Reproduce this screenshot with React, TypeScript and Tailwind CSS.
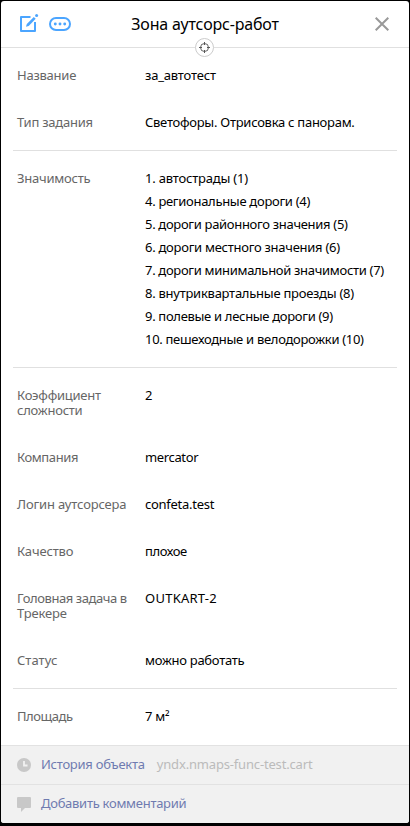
import type { ReactNode } from "react";

const significance = [
  { text: "1. автострады (1)", fit: "tracking-[-0.2px]" },
  { text: "4. региональные дороги (4)", fit: "tracking-[-0.3px]" },
  { text: "5. дороги районного значения (5)", fit: "tracking-[-0.31px]" },
  { text: "6. дороги местного значения (6)", fit: "tracking-[-0.27px]" },
  { text: "7. дороги минимальной значимости (7)", fit: "tracking-[-0.31px]" },
  { text: "8. внутриквартальные проезды (8)", fit: "tracking-[-0.26px]" },
  { text: "9. полевые и лесные дороги (9)", fit: "tracking-[-0.31px]" },
  { text: "10. пешеходные и велодорожки (10)", fit: "tracking-[-0.3px]" },
];

function Row({ label, children }: { label: ReactNode; children: ReactNode }) {
  return (
    <div className="flex px-4">
      <div className="w-32 shrink-0 tracking-[-0.24px] whitespace-nowrap text-[#666]">{label}</div>
      <div className="tracking-[-0.27px] whitespace-nowrap text-black">{children}</div>
    </div>
  );
}

function Section({ children, first = false }: { children: ReactNode; first?: boolean }) {
  return (
    <section className={first ? "flex flex-col gap-8 pt-5 pb-5" : "mx-3 flex flex-col gap-8 border-t border-[#e0e0e0] py-5 *:-mx-3"}>
      {children}
    </section>
  );
}

export default function App() {
  return (
    <main className="h-[826px] w-[410px] bg-black px-px pt-px pb-[3px] font-['Noto_Sans',sans-serif] text-[13px] leading-[15px]">
      <div className="flex h-[822px] flex-col overflow-hidden rounded-[3px] bg-white">
        <header className="relative flex h-[47px] shrink-0 items-center border-b border-[#e0e0e0]">
          <div className="flex w-[72px] shrink-0 justify-between pl-[18px]">
            <svg width="22" height="24" viewBox="0 0 22 24" fill="none" stroke="#4ba5ff">
              <path d="M11.5 5H2v14h14V10" strokeWidth="2" strokeLinejoin="round" />
              <path d="m7 14.8.8-2.8 7-7.1 1.9 1.9-7 7.1z" fill="#4ba5ff" stroke="none" />
              <circle cx="17.6" cy="3.4" r="1.5" fill="#4ba5ff" stroke="none" />
            </svg>
            <svg width="24" height="24" viewBox="0 0 24 24" fill="none">
              <rect x="1" y="6" width="20" height="12" rx="6" stroke="#4ba5ff" strokeWidth="2" />
              <g fill="#4ba5ff"><circle cx="6.3" cy="12" r="1.45" /><circle cx="11" cy="12" r="1.45" /><circle cx="15.7" cy="12" r="1.45" /></g>
            </svg>
          </div>
          <h1 className="flex-1 text-center text-[16px] leading-6 tracking-[-0.18px] whitespace-nowrap text-black">Зона аутсорс-работ</h1>
          <div className="flex w-[72px] justify-end pr-5">
            <svg width="14" height="14" viewBox="0 0 14 14" stroke="#999" strokeWidth="2"><path d="m.7.7 12.6 12.6M13.3.7.7 13.3" /></svg>
          </div>
          <div className="absolute top-[37px] left-[194px] flex size-[19px] items-center justify-center rounded-full border border-[#ccc] bg-white">
            <svg width="11" height="11" viewBox="0 0 11 11" fill="none" stroke="#555"><circle cx="5.5" cy="5.5" r="4" strokeWidth="0.9" /><path d="M5.5 0v3M5.5 8v3M0 5.5h3M8 5.5h3" /></svg>
          </div>
        </header>
        <div className="h-[697px] shrink-0">
          <Section first>
            <Row label="Название"><span className="tracking-[-0.18px]">за_автотест</span></Row>
            <Row label="Тип задания">Светофоры. Отрисовка с панорам.</Row>
          </Section>
          <Section>
            <Row label="Значимость">
              <ul className="-my-1 leading-[23px]">
                {significance.map((item) => <li key={item.text} className={item.fit}>{item.text}</li>)}
              </ul>
            </Row>
          </Section>
          <Section>
            <Row label={<>Коэффициент<br />сложности</>}>2</Row>
            <Row label={<span className="tracking-[-0.4px]">Компания</span>}><span className="tracking-[-0.36px]">mercator</span></Row>
            <Row label={<span className="tracking-[-0.17px]">Логин аутсорсера</span>}>confeta.test</Row>
            <Row label={<span className="tracking-[-0.15px]">Качество</span>}><span className="tracking-[-0.4px]">плохое</span></Row>
            <Row label={<><span className="tracking-[-0.42px]">Головная задача в</span><br /><span className="tracking-[-0.15px]">Трекере</span></>}>
              <span className="tracking-[0.25px]">OUTKART-2</span>
            </Row>
            <Row label={<span className="tracking-[0.05px]">Статус</span>}>можно работать</Row>
          </Section>
          <Section>
            <Row label={<span className="tracking-[-0.45px]">Площадь</span>}>7 м²</Row>
          </Section>
        </div>
        <footer className="flex-1 bg-[#f1f1f1] tracking-[-0.25px] text-[#6f7bb0]">
          <div className="flex h-[39px] items-center border-t border-[#e2e2e2] pl-4">
            <svg width="14" height="14" viewBox="0 0 14 14"><circle cx="7" cy="7" r="7" fill="#c8c8c8" /><path d="M7 3v4.5h3.5" fill="none" stroke="#f1f1f1" strokeWidth="1.8" /></svg>
            <a className="mb-0.5 ml-2.5 whitespace-nowrap">История объекта</a>
            <span className="mb-0.5 ml-3 tracking-[-0.17px] text-[#bbb]">yndx.nmaps-func-test.cart</span>
          </div>
          <div className="flex h-[39px] items-center border-t border-[#e2e2e2] pl-4">
            <svg width="14" height="15" viewBox="0 0 14 15" fill="#c8c8c8"><path d="M1 0h12a1 1 0 0 1 1 1v9a1 1 0 0 1-1 1H8l-4 4v-4H1a1 1 0 0 1-1-1V1a1 1 0 0 1 1-1Z" /></svg>
            <a className="mb-0.5 ml-2.5 tracking-[-0.28px] whitespace-nowrap">Добавить комментарий</a>
          </div>
        </footer>
      </div>
    </main>
  );
}
